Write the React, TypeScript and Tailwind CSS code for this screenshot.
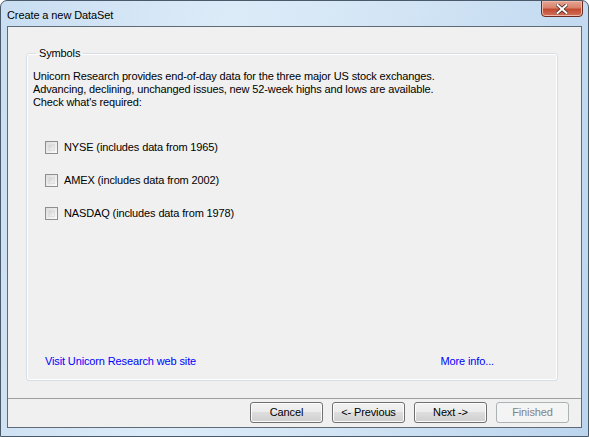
import React from "react";

const font = { fontFamily: '"Liberation Sans", Arial, sans-serif' };

function Checkbox({ label }: { label: string }) {
  return (
    <label className="flex items-center gap-[6px] h-[13px]">
      <span className="w-[13px] h-[13px] border border-[#8f8f8f] bg-gradient-to-br from-[#dcdcdc] to-[#fbfbfb] p-[2px] flex">
        <span className="flex-1 border border-[#dedede] bg-gradient-to-br from-[#cfcfcf] to-[#f6f6f6]" />
      </span>
      <span>{label}</span>
    </label>
  );
}

function Button({ label, disabled }: { label: string; disabled?: boolean }) {
  return (
    <button
      className={
        disabled
          ? "w-[73px] h-[21px] rounded-[3px] border border-[#adb2b5] bg-[#f4f4f4] text-[#838383] text-[11px] leading-none"
          : "w-[73px] h-[21px] rounded-[3px] border border-[#707070] bg-[linear-gradient(#f2f2f2_0%,#ebebeb_49%,#dddddd_50%,#cfcfcf_100%)] text-black text-[11px] leading-none shadow-[inset_0_0_0_1px_#fcfcfc]"
      }
      style={font}
    >
      {label}
    </button>
  );
}

export default function App() {
  return (
    <div
      className="w-[589px] h-[437px] overflow-hidden rounded-t-[7px] border border-[#4b5a6a] bg-[linear-gradient(100deg,#c9def2_0%,#dcebf8_35%,#d3e5f5_60%,#bcd5ee_100%)] flex flex-col text-[11px] text-black tracking-[-0.13px]"
      style={font}
    >
      {/* Title bar */}
      <div className="h-[25px] flex items-start justify-between pl-[6px] pr-[5px] shrink-0">
        <span className="mt-[7px] text-[11px] leading-[14px] tracking-[-0.1px] text-black">Create a new DataSet</span>
        <div className="w-[42px] h-[17px] -mt-px rounded-b-[4px] border border-[#6b2a22] bg-[linear-gradient(#e6a493_0%,#d9836c_45%,#c24a30_55%,#d0705a_100%)] flex items-center justify-center shadow-[inset_0_0_0_1px_#f0b8a8]">
          <svg width="12" height="10" viewBox="0 0 12 10">
            <path d="M1.5 1 L10.5 9 M10.5 1 L1.5 9" stroke="#4a2a26" strokeWidth="3.6" strokeLinecap="square" />
            <path d="M1.5 1 L10.5 9 M10.5 1 L1.5 9" stroke="#ffffff" strokeWidth="2" strokeLinecap="square" />
          </svg>
        </div>
      </div>

      {/* Client */}
      <div className="mx-[6px] mb-[8px] flex-1 border border-[#5e6a75] bg-[#f0f0f0] flex flex-col">
        <div className="flex-1 pl-[18px] pr-[23px] pt-[20px]">
          <fieldset className="h-[334px] border border-[#d5dfe5] rounded-[3px] shadow-[inset_0_0_0_1px_#ffffff] pl-[6px] pr-[10px] flex flex-col">
            <legend className="ml-[3px] px-[3px] leading-[13px]">Symbols</legend>
            <div className="mt-[10px] leading-[13px]">
              <p>Unicorn Research provides end-of-day data for the three major US stock exchanges.</p>
              <p>Advancing, declining, unchanged issues, new 52-week highs and lows are available.</p>
              <p>Check what's required:</p>
            </div>
            <div className="mt-[32px] ml-[12px] flex flex-col gap-[20px]">
              <Checkbox label="NYSE (includes data from 1965)" />
              <Checkbox label="AMEX (includes data from 2002)" />
              <Checkbox label="NASDAQ (includes data from 1978)" />
            </div>
            <div className="mt-auto mb-[12px] ml-[12px] mr-[53px] flex justify-between leading-[13px] text-[#0000ff]">
              <span>Visit Unicorn Research web site</span>
              <span>More info...</span>
            </div>
          </fieldset>
        </div>
        <div className="h-[29px] border-t border-[#a0a0a0] flex items-start justify-end gap-[9px] pt-[3px] pr-[12px] shrink-0">
          <Button label="Cancel" />
          <Button label="<- Previous" />
          <Button label="Next ->" />
          <Button label="Finished" disabled />
        </div>
      </div>
    </div>
  );
}
